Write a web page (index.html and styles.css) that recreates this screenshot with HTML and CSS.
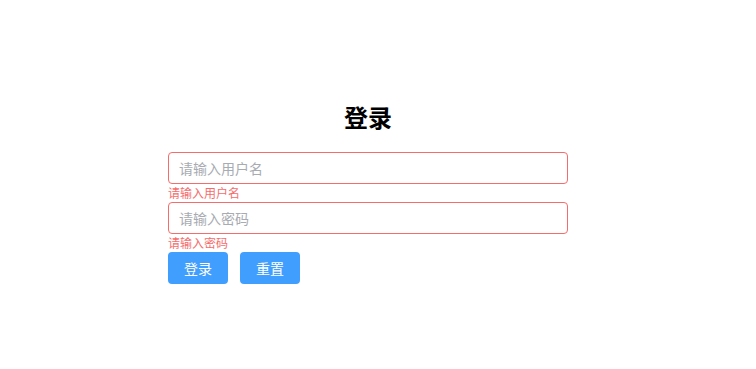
FILE: index.html
```html
<!DOCTYPE html>
<html lang="zh">
<head>
<meta charset="utf-8">
<title>登录</title>
<link rel="stylesheet" href="styles.css">
</head>
<body>
<div class="page">
  <form class="login">
    <h2 class="title">登录</h2>
    <div class="field">
      <input class="input" type="text" placeholder="请输入用户名">
      <div class="error">请输入用户名</div>
    </div>
    <div class="field">
      <input class="input" type="password" placeholder="请输入密码">
      <div class="error">请输入密码</div>
    </div>
    <div class="actions">
      <button type="button" class="btn">登录</button>
      <button type="button" class="btn">重置</button>
    </div>
  </form>
</div>
</body>
</html>
```
FILE: styles.css
```css
html, body {
  margin: 0;
  padding: 0;
  background: #fff;
  font-family: "Noto Sans CJK SC", "Noto Sans", sans-serif;
}
.page {
  width: 736px;
  padding-top: 99px;
}
.login {
  width: 400px;
  margin: 0 auto;
  display: flex;
  flex-direction: column;
}
.title {
  margin: 0 0 17px;
  font-size: 24px;
  line-height: 36px;
  font-weight: bold;
  text-align: center;
  color: #000;
}
.field {
  display: flex;
  flex-direction: column;
}
.input {
  box-sizing: border-box;
  width: 400px;
  height: 32px;
  margin: 0;
  padding: 0 10px;
  border: 1px solid #f56c6c;
  border-radius: 4px;
  font-family: inherit;
  font-size: 14px;
  color: #606266;
  outline: none;
  background: #fff;
}
.input::placeholder {
  color: #a8abb2;
}
.error {
  font-size: 12px;
  line-height: 18px;
  color: #f56c6c;
}
.actions {
  display: flex;
  gap: 12px;
}
.btn {
  width: 60px;
  height: 32px;
  padding: 0;
  border: none;
  border-radius: 4px;
  background: #409eff;
  color: #fff;
  font-family: inherit;
  font-size: 14px;
  cursor: pointer;
}
```
